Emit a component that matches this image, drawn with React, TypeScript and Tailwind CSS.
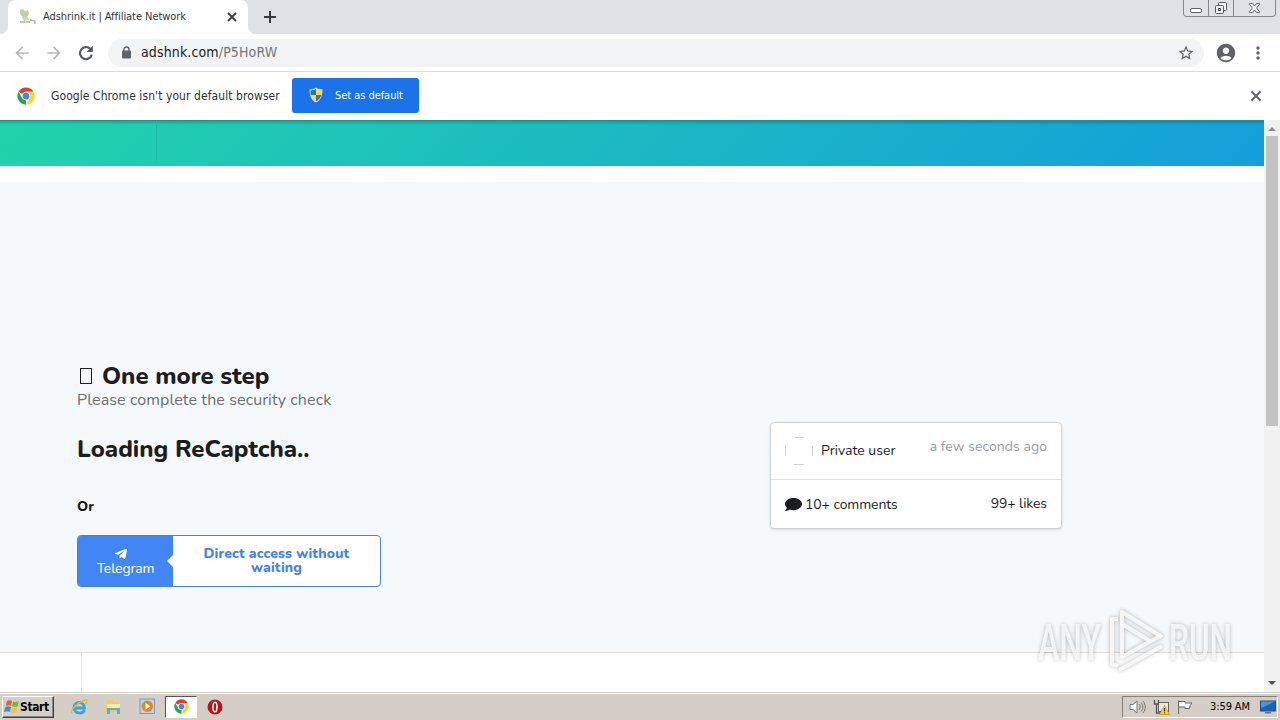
import { ReactNode } from "react";
import { FaComment, FaTelegramPlane } from "react-icons/fa";
import { MdAccountCircle, MdArrowBack, MdArrowForward, MdMoreVert, MdStarBorder } from "react-icons/md";

const ChromeLogo: React.FC<{ size: number }> = ({ size }) => (
  <svg width={size} height={size} viewBox="0 0 48 48">
    <circle cx="24" cy="24" r="23" fill="#fff" />
    <path d="M24 24 4.1 12.5A23 23 0 0 1 43.9 12.5H24Z" fill="#e33b2e" />
    <path d="M4.1 12.5 14 29.8 24 35.5 24 47A23 23 0 0 1 4.1 12.5Z" fill="#2da14d" />
    <path d="M43.9 12.5A23 23 0 0 1 24 47L34 29.8 33.5 18 24 12.5Z" fill="#fdd131" />
    <circle cx="24" cy="24" r="11.5" fill="#fff" />
    <circle cx="24" cy="24" r="9" fill="#4285f4" />
  </svg>
);

const TabStrip: React.FC = () => (
  <div className="flex h-[34px] bg-[#dee1e6]">
    <div className="w-2 bg-white">
      <div className="h-full rounded-br-lg bg-[#dee1e6]" />
    </div>
    <div className="flex w-[240px] items-center rounded-t-lg bg-white pl-[11px]">
      <svg width="18" height="18" viewBox="0 0 18 18">
        <path d="M1 2 4 1 6 3 9 2 10 6 8 9 4 9 1 6Z" fill="#a9c78e" opacity=".8" />
        <path d="M3 9 8 8 10 12 5 13Z" fill="#c3d8af" />
        <path d="M1 14H11M11 12 16 13V16" stroke="#a7bd97" strokeWidth="1.3" fill="none" />
      </svg>
      <span className="ml-[6px] w-[180px] whitespace-nowrap text-[11px] tracking-[-0.05px] text-[#30343a]">
        Adshrink.it | Affiliate Network
      </span>
      <svg className="ml-[4px]" width="10" height="10" viewBox="0 0 10 10">
        <path d="M1 1 9 9M9 1 1 9" stroke="#3c4043" strokeWidth="1.8" />
      </svg>
    </div>
    <div className="w-2 bg-white">
      <div className="h-full rounded-bl-lg bg-[#dee1e6]" />
    </div>
    <svg className="ml-[7px] mt-[10px]" width="14" height="14" viewBox="0 0 14 14">
      <path d="M7 1V13M1 7H13" stroke="#35383c" strokeWidth="2" />
    </svg>
    <div className="ml-auto mr-1 flex h-[17px] w-[93px] overflow-hidden rounded-b-[4px] border border-t-0 border-[#83868c]">
      <div className="flex w-[25px] items-end justify-center border-r border-[#83868c] pb-[3px]">
        <div className="h-[5px] w-[12px] rounded-[2px] border border-[#5c6065] bg-white" />
      </div>
      <div className="flex w-[25px] items-center justify-center border-r border-[#83868c]">
        <svg width="14" height="14" viewBox="0 0 14 14" fill="#f4f5f7" stroke="#565a60">
          <rect x="4.5" y="1.5" width="8" height="8" rx="1" />
          <rect x="1.5" y="4.5" width="8" height="8" rx="1" />
          <rect x="4.5" y="7.5" width="2" height="2" />
        </svg>
      </div>
      <div className="flex flex-1 items-center justify-center">
        <svg width="13" height="12" viewBox="0 0 13 12">
          <path
            d="M1.5 1.5H4.5L6.5 4 8.5 1.5H11.5V2.5L8.5 6 11.5 9.5V10.5H8.5L6.5 8 4.5 10.5H1.5V9.5L4.5 6 1.5 2.5Z"
            fill="#fff"
            stroke="#5d6167"
          />
        </svg>
      </div>
    </div>
  </div>
);

const Toolbar: React.FC = () => (
  <div className="flex h-[38px] items-center border-b border-[#d9dbdd] bg-white pl-[12px] text-[#5f6368]">
    <MdArrowBack className="size-[20px] text-[#b5b7ba]" />
    <MdArrowForward className="ml-[12px] size-[20px] text-[#b5b7ba]" />
    <svg className="ml-[12px]" width="20" height="20" viewBox="0 0 20 20">
      <path d="M14.4 6A6 6 0 1 0 15.8 11.6" fill="none" stroke="#54585c" strokeWidth="2.1" />
      <path d="M16.8 2.8V9H10.6Z" fill="#54585c" />
    </svg>
    <div className="ml-[12px] flex h-[28px] w-[1096px] items-center rounded-full bg-[#f1f3f4] pl-[11px] pr-[9px]">
      <svg className="ml-[2px]" width="11" height="13" viewBox="0 0 11 13">
        <rect x="1" y="4.5" width="9" height="8" rx="1" fill="#5f6368" />
        <path d="M3 5V3.5A2.5 2.5 0 0 1 8 3.5V5" fill="none" stroke="#5f6368" strokeWidth="1.4" />
      </svg>
      <span className="ml-[9px] whitespace-nowrap text-[14px] tracking-[0.13px] text-[#202124]">
        adshnk.com<span className="text-[#73777b]">/P5HoRW</span>
      </span>
      <MdStarBorder className="ml-auto size-[18px]" />
    </div>
    <MdAccountCircle className="ml-[11px] size-[22px]" />
    <MdMoreVert className="ml-[11px] size-[20px]" />
  </div>
);

const DefaultBrowserBar: React.FC = () => (
  <div className="flex h-[48px] items-center bg-white pl-[17px] pr-[18px]">
    <ChromeLogo size={18} />
    <span className="ml-[16px] w-[229px] whitespace-nowrap text-[12px] tracking-[0.08px] text-[#303134]">
      Google Chrome isn't your default browser
    </span>
    <button className="-mt-px ml-[12px] flex h-[35px] w-[127px] items-center rounded-[3px] bg-[#1a73e8] pl-[17px] text-[11px] text-white">
      <svg className="-mt-px" width="14" height="16" viewBox="0 0 14 16">
        <path d="M7 .5C9 2 11 2.2 13.4 2.2 13.6 8 12 13 7 15.6 2 13 .4 8 .6 2.2 3 2.2 5 2 7 .5Z" fill="#d8dde2" />
        <path d="M7 2V8H1.7C1.5 6.5 1.5 5 1.6 3.4 3.6 3.4 5.5 3 7 2Z" fill="#2b71bd" />
        <path d="M7 2V8H12.3C12.5 6.5 12.5 5 12.4 3.4 10.4 3.4 8.5 3 7 2Z" fill="#ffd83d" />
        <path d="M7 8V14.3C4 12.8 2.3 10.5 1.7 8Z" fill="#ffd83d" />
        <path d="M7 8V14.3C10 12.8 11.7 10.5 12.3 8Z" fill="#2b71bd" />
      </svg>
      <span className="ml-[12px] mt-px whitespace-nowrap tracking-[-0.05px]">Set as default</span>
    </button>
    <svg className="ml-auto" width="12" height="12" viewBox="0 0 12 12">
      <path d="M1.5 1.5 10.5 10.5M10.5 1.5 1.5 10.5" stroke="#5f6368" strokeWidth="2" />
    </svg>
  </div>
);

const SecurityCheck: React.FC = () => (
  <div className="w-[304px] pt-[179px]">
    <h1 className="flex h-[30px] items-center whitespace-nowrap text-[24px] font-extrabold text-[#1b1d1f]">
      <span className="ml-[3px] mr-[10px] h-[16px] w-[12px] border border-[#1b1d1f]" />
      One more step
    </h1>
    <p className="h-[18px] whitespace-nowrap text-[16px] leading-[18px] tracking-[0.11px] text-[#6a6e71]">
      Please complete the security check
    </p>
    <h2 className="mt-[25px] h-[30px] whitespace-nowrap text-[24px] font-extrabold leading-[30px] text-[#1b1d1f]">
      Loading ReCaptcha..
    </h2>
    <p className="mt-[34px] h-[18px] text-[14px] font-extrabold leading-[18px] text-[#16181a]">Or</p>
    <a className="mt-[19px] flex h-[52px] overflow-hidden rounded-[4px] border border-[#4b80dd] bg-white">
      <span className="flex w-[95px] flex-col items-center bg-[#4285f4] pt-[11px] text-white">
        <FaTelegramPlane className="mr-[9px] size-[14px]" />
        <span className="text-[14px] leading-[15px] tracking-[-0.15px]">Telegram</span>
      </span>
      <span className="-ml-[6px] h-[12px] w-[6px] self-center bg-white [clip-path:polygon(100%_0,100%_100%,0_50%)]" />
      <span className="flex-1 pt-[11px] text-center text-[14px] font-extrabold leading-[14px] tracking-[0.15px] text-[#4582e8]">
        Direct access without
        <br />
        waiting
      </span>
    </a>
  </div>
);

const ShareCard: React.FC = () => (
  <div className="mt-[240px] h-[107px] w-[292px] rounded-[4px] border border-[#cfd2d4] bg-white text-[14px] text-[#1b1d1f] shadow-sm">
    <div className="flex h-[57px] border-b border-[#dfe1e3] px-[14px]">
      <svg className="mt-[14px]" width="28" height="28" viewBox="0 0 28 28">
        <path d="M9 .5H19M9 27.5H19M.5 9V19M27.5 9V19" stroke="#d0d0d0" />
      </svg>
      <span className="ml-[8px] mt-[18px] leading-[20px]">Private user</span>
      <span className="ml-auto mt-[14px] leading-[20px] tracking-[0.05px] text-[#989b9e]">a few seconds ago</span>
    </div>
    <div className="flex h-[48px] items-center px-[14px]">
      {/* bubble is wider than it is tall */}
      <FaComment className="h-[15px] w-[17px]" preserveAspectRatio="none" />
      <span className="ml-[3px] tracking-[-0.1px]">10+ comments</span>
      <span className="-mt-px ml-auto tracking-[-0.1px]">99+ likes</span>
    </div>
  </div>
);

const Scrollbar: React.FC = () => (
  <div className="flex w-4 flex-col items-center bg-[#f1f1f1] text-[#505050]">
    <svg className="h-[16px] shrink-0" width="16" height="16" viewBox="0 0 16 16">
      <path d="M4 11H12L8 7Z" fill="#8b8b8b" />
    </svg>
    <div className="h-[290px] w-[12px] bg-[#c1c1c1]" />
    <svg className="mt-auto" width="16" height="17" viewBox="0 0 16 17">
      <path d="M4 6H12L8 10Z" fill="#505050" />
    </svg>
  </div>
);

const WebPage: React.FC = () => (
  <div className="flex h-[572px] font-[Nunito,'Noto_Sans',sans-serif]">
    <div className="flex-1 bg-white">
      <div className="h-[46px] border-t border-[#248f85] bg-[linear-gradient(135deg,#22d3ab,#159edb)] shadow-[inset_0_4px_3px_-2px_rgba(0,0,0,0.18)]">
        <div className="h-[40px] w-[157px] border-r border-[#1eb9a4]" />
      </div>
      <div className="mt-4 flex h-[471px] border-b border-[#dcdee0] bg-[#f5f9fc] pl-[77px] pr-[202px]">
        <SecurityCheck />
        <div className="ml-auto">
          <ShareCard />
        </div>
      </div>
      <div className="h-[39px] w-[82px] border-r border-[#e4e4e4]" />
    </div>
    <Scrollbar />
  </div>
);

const QuickLaunch: React.FC<{ active?: boolean; children: ReactNode }> = ({ active, children }) => (
  <div
    className={
      active
        ? "flex h-[22px] w-[32px] items-center justify-center border border-b-white border-l-[#555] border-r-white border-t-[#555] bg-white"
        : "flex h-[22px] w-[20px] items-center justify-center"
    }
  >
    {children}
  </div>
);

const Taskbar: React.FC = () => (
  <div className="flex h-[28px] items-center border-t border-[#d4d0c8] bg-[#d4cec6] pl-0.5 pr-0.5 shadow-[inset_0_1px_0_#fff]">
    <button className="flex h-[22px] w-[52px] items-center border border-b-[#404040] border-l-white border-r-[#404040] border-t-white pl-[1px] shadow-[inset_-1px_-1px_0_#888]">
      <svg width="16" height="16" viewBox="0 0 16 16">
        <path d="M3 2C5 1 6 1 8 2L7 7C5 6 4 6 1.7 7Z" fill="#e66132" />
        <path d="M9 2.5C11 3.3 12 3.3 15 2.3L13.5 7.5C11.5 8.3 10 8.2 8 7.3Z" fill="#76b83f" />
        <path d="M1.4 8C4 7 5 7 7 8L5.8 13C4 12 2.5 12 0 13Z" fill="#398dd7" />
        <path d="M7.8 8.3C10 9.2 11 9.3 13.3 8.5L12 13.5C10 14.3 8.5 14 6.5 13.2Z" fill="#f8c331" />
      </svg>
      <span className="whitespace-nowrap text-[12px] font-bold tracking-[-0.4px] text-black">Start</span>
    </button>
    <div className="ml-[15px] flex items-center">
      <QuickLaunch>
        <svg width="18" height="18" viewBox="0 0 18 18" fill="none">
          <path d="M14.5 12C12 17 4 15.5 4 9.5 4 3 14 2.5 14.5 10H5" stroke="#3ba3de" strokeWidth="2.8" />
          <path d="M2 15C-1 13 8 4 15 2 18 1 17 4 15.5 6" stroke="#e4b83d" strokeWidth="1.4" />
        </svg>
      </QuickLaunch>
      <div className="w-[14px]" />
      <QuickLaunch>
        <svg width="16" height="16" viewBox="0 0 16 16">
          <path d="M1 3 2 1H7L8 3H14V13H1Z" fill="#e9cb67" />
          <path d="M2 5H15V9H2Z" fill="#f8e9a5" />
          <path d="M2 9H15V15H12V11H5V15H2Z" fill="#58afd3" />
        </svg>
      </QuickLaunch>
      <div className="w-[14px]" />
      <QuickLaunch>
        <svg width="17" height="17" viewBox="0 0 17 17">
          <rect x="1" y="1" width="14.5" height="14.5" fill="#b8d3eb" stroke="#6f9cc9" />
          <circle cx="8.3" cy="8.3" r="5.7" fill="#ef8519" />
          <path d="M6.5 5 11.5 8.3 6.5 11.6Z" fill="#fff" />
        </svg>
      </QuickLaunch>
      <div className="w-[8px]" />
      <QuickLaunch active>
        <ChromeLogo size={15} />
      </QuickLaunch>
      <div className="w-[8px]" />
      <QuickLaunch>
        <svg width="16" height="16" viewBox="0 0 16 16">
          <circle cx="8" cy="8" r="7.5" fill="#b5161b" />
          <ellipse cx="8" cy="8" rx="2" ry="4.8" fill="#b5161b" stroke="#fff" strokeWidth="1.6" />
        </svg>
      </QuickLaunch>
    </div>
    <div className="ml-auto flex h-[22px] w-[156px] items-center border border-b-white border-l-[#858179] border-r-white border-t-[#858179] pl-[6px]">
      <svg width="17" height="16" viewBox="0 0 17 16" fill="#fff" stroke="#77756f">
        <path d="M1 5.5H4L8 2V14L4 10.5H1Z" />
        <path d="M10 5C11.5 7 11.5 9 10 11M12 3.5C14.5 6.5 14.5 9.5 12 12.5M14 2C17 6 17 10 14 14" fill="none" />
      </svg>
      <svg className="ml-[7px]" width="17" height="16" viewBox="0 0 17 16">
        <rect x="5.5" y="3.5" width="10" height="9" fill="#e8e8e5" stroke="#66645f" />
        <path d="M1.5 1V5H5.5V1M3.5 5V14H8" fill="none" stroke="#55534e" strokeWidth="1.3" />
        <path d="M11.5 6.5 16.5 15.5H6.5Z" fill="#ffd52d" stroke="#ad870f" strokeWidth=".6" />
        <path d="M11.5 9V12.5M11.5 13.3V14.5" stroke="#403a1f" strokeWidth="1.2" />
      </svg>
      <svg className="ml-[7px]" width="17" height="16" viewBox="0 0 17 16">
        <path d="M1.5 15V1.5M2 2.5H8V4H15C13 6 13 7 12.5 9.5H8V8H2" fill="#fff" stroke="#66645f" />
      </svg>
      <span className="ml-[16px] mt-0.5 w-[41px] whitespace-nowrap text-[11px] tracking-[-0.1px] text-black">3:59 AM</span>
      <svg className="ml-[9px]" width="16" height="14" viewBox="0 0 16 14">
        <rect x=".5" y="1" width="15" height="10" fill="#1c63b7" stroke="#264d80" />
        <path d="M1 1.5H15L1 8Z" fill="#4896dc" />
        <path d="M5 12H11V13.5H5Z" fill="#66717d" />
      </svg>
    </div>
  </div>
);

// translucent recorder logo floating above the desktop
const Watermark: React.FC = () => (
  <svg
    className="absolute left-[1032px] top-[604px] overflow-visible drop-shadow-[0_0_2px_rgba(0,0,0,0.35)]"
    width="240"
    height="74"
    viewBox="0 0 240 74"
  >
    <g fill="#fff" fillOpacity=".75" fontFamily="Roboto, sans-serif" fontSize="50" fontWeight="500">
      <text x="6" y="56" textLength="63" lengthAdjust="spacingAndGlyphs">
        ANY
      </text>
      <text x="137" y="56" textLength="63" lengthAdjust="spacingAndGlyphs">
        RUN
      </text>
    </g>
    <g fill="none" stroke="#fff" strokeOpacity=".8" strokeWidth="4" strokeLinejoin="round">
      <path d="M86 15H80V60L86 62" />
      <path d="M118 37 90 20V8L130 33" />
      <path d="M90 20V53L130 31" />
      <path d="M87 66 91 64 130 42" />
    </g>
  </svg>
);

export default function App() {
  return (
    <div className="relative h-[720px] w-[1280px] overflow-hidden bg-white font-['DejaVu_Sans_Condensed','DejaVu_Sans',sans-serif]">
      <TabStrip />
      <Toolbar />
      <DefaultBrowserBar />
      <WebPage />
      <Taskbar />
      <Watermark />
    </div>
  );
}
